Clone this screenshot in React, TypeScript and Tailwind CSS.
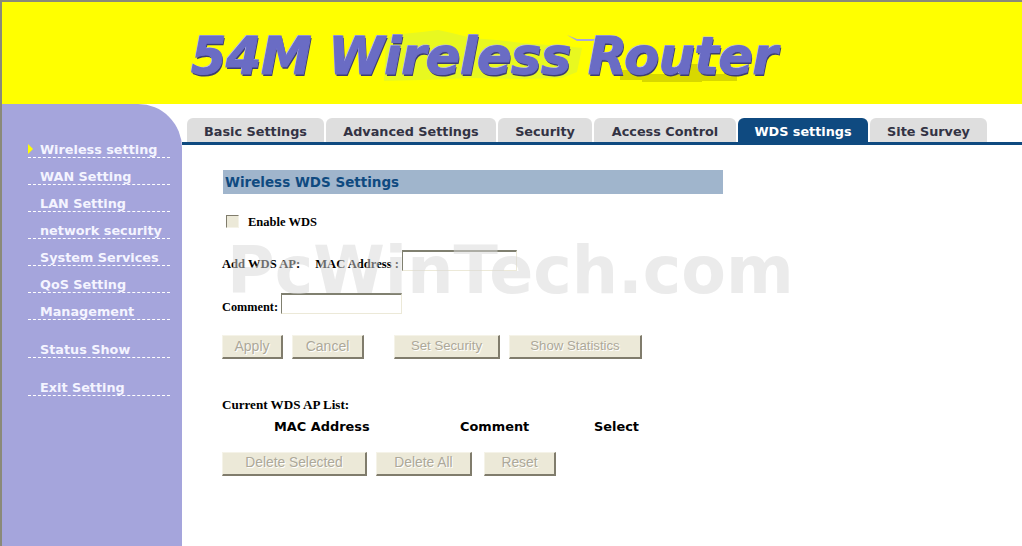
import React from "react";

const sans = "font-['DejaVu_Sans',Verdana,sans-serif]";
const serif = "font-['Liberation_Serif','Times_New_Roman',serif]";

const tabs = [
  { label: "Basic Settings", w: "w-[137px]" },
  { label: "Advanced Settings", w: "w-[170px]" },
  { label: "Security", w: "w-[94px]" },
  { label: "Access Control", w: "w-[142px]" },
  { label: "WDS settings", w: "w-[130px]", active: true },
  { label: "Site Survey", w: "w-[117px]" },
];

const nav = [
  { label: "Wireless setting", active: true },
  { label: "WAN Setting" },
  { label: "LAN Setting" },
  { label: "network security" },
  { label: "System Services" },
  { label: "QoS Setting" },
  { label: "Management" },
  { label: "Status Show", gap: true },
  { label: "Exit Setting", gap: true },
];

function Btn({ label, w, ml = "", size = "text-[13.2px]" }: { label: string; w: string; ml?: string; size?: string }) {
  return (
    <button
      disabled
      className={`${w} ${ml} ${size} h-[24px] pb-[1px] bg-[#ece9d8] border-t border-l border-t-[#f5f3e8] border-l-[#f5f3e8] border-r-2 border-b-2 border-r-[#807c6c] border-b-[#807c6c] font-['Liberation_Sans',Arial,sans-serif] leading-none text-[#aca899] [text-shadow:1px_1px_0_#fff]`}
    >
      {label}
    </button>
  );
}

function Field({ w }: { w: string }) {
  return (
    <span className={`${w} h-[21px] block border-t-2 border-l border-t-[#808070] border-l-[#808070] border-r border-b border-r-[#ece9d8] border-b-[#ece9d8]`} />
  );
}

export default function App() {
  return (
    <div className="relative w-[1022px] h-[546px] overflow-hidden bg-white flex flex-col">
      <header className="relative h-[104px] shrink-0 bg-[#ffff00] border-t-2 border-l-2 border-[#8a8a78] pl-[189px] pt-[24px]">
        <svg className="absolute left-0 top-0" width="1020" height="102" viewBox="0 0 1020 102" aria-hidden="true">
          <path d="M384 36L400 32L420 30L436 28L450 31L470 36L495 38L520 41L560 44L580 46L575 70L560 76L520 77L470 76L420 78L382 79Z" fill="#e8f820" />
          <path d="M618 68H640V72H680V62H700V72H722V66H735V79H700V80H640V78H618Z" fill="#d8d800" />
          <path d="M565 33L575 37H600L590 39H575Z" fill="#a8a8d8" />
        </svg>
        <h1 className="relative font-['DejaVu_Sans',Verdana,sans-serif] font-bold italic text-[51px] leading-[62px] tracking-[-0.5px] text-[#6a6cc4] [-webkit-text-stroke:1px_#6a6cc4] [text-shadow:-1px_-1px_0_#b9b9ea,1px_2px_0_#3e3e70]">
          54M Wireless Router
        </h1>
      </header>

      <div className="flex flex-1 min-h-0">
        <aside className="w-[182px] shrink-0 bg-[#a5a5dc] rounded-tr-[44px] border-l-2 border-[#8a8a78] pt-[27px] pl-[26px]">
          <ul className={`${sans} w-[142px] font-bold text-[12.8px] text-[#f4f4ff]`}>
            {nav.map((n) => (
              <li
                key={n.label}
                className={`relative h-[27px] pt-[10px] pl-[12px] leading-[17px] border-b border-dashed border-white ${n.gap ? "mt-[11px]" : ""}`}
              >
                {n.active && (
                  <span className="absolute left-0 top-[13px] w-0 h-0 border-y-[5px] border-y-transparent border-l-[5px] border-l-[#ffff00]" />
                )}
                {n.label}
              </li>
            ))}
          </ul>
        </aside>

        <main className="flex-1 min-w-0">
          <nav className={`${sans} h-[41px] pt-[14px] pl-[5px] flex gap-[2px] items-end border-b-[3px] border-[#0f4a80] font-bold text-[12.8px]`}>
            {tabs.map((t) => (
              <div
                key={t.label}
                className={`${t.w} h-[24px] pt-[3px] rounded-t-[6px] flex items-center justify-center ${t.active ? "bg-[#0f4a80] text-white" : "bg-[#dedede] text-[#333344]"}`}
              >
                {t.label}
              </div>
            ))}
          </nav>

          <section className="pl-[40px] pt-[25px]">
            <h2 className={`${sans} ml-px w-[500px] h-[24px] bg-[#a0b5cc] pl-[2px] font-bold text-[13.5px] leading-[24px] text-[#0f4a80]`}>
              Wireless WDS Settings
            </h2>

            <div className={`${serif} font-bold text-black`}>
              <div className="mt-[20px] ml-[4px] h-[14px] flex items-center">
                <span className="w-[13px] h-[13px] bg-[#ece9d8] border-t border-l border-[#807c6c] border-r border-b border-r-[#f5f3e8] border-b-[#f5f3e8]" />
                <span className="ml-[9px] mt-[2px] text-[12.5px]">Enable WDS</span>
              </div>

              <div className="mt-[22px] h-[21px] flex items-center text-[12.6px]">
                <span className="mt-[7px]">Add WDS AP:</span>
                <span className="ml-[15px] mt-[7px]">MAC Address :</span>
                <span className="ml-[3px]">
                  <Field w="w-[115px]" />
                </span>
              </div>

              <div className="mt-[22px] h-[21px] flex items-center text-[12.3px]">
                <span className="mt-[7px]">Comment:</span>
                <span className="ml-[3px]">
                  <Field w="w-[121px]" />
                </span>
              </div>
            </div>

            <div className="mt-[21px] flex">
              <Btn label="Apply" w="w-[61px]" size="text-[14px]" />
              <Btn label="Cancel" w="w-[72px]" ml="ml-[9px]" size="text-[14px]" />
              <Btn label="Set Security" w="w-[106px]" ml="ml-[30px]" />
              <Btn label="Show Statistics" w="w-[133px]" ml="ml-[9px]" />
            </div>

            <p className={`${serif} mt-[39px] font-bold text-[13.1px] leading-[14px] text-black`}>Current WDS AP List:</p>

            <div className={`${sans} mt-[6px] h-[18px] flex font-bold text-[12.9px] leading-[18px] text-black`}>
              <span className="ml-[52px] w-[186px]">MAC Address</span>
              <span className="w-[134px]">Comment</span>
              <span>Select</span>
            </div>

            <div className="mt-[16px] flex">
              <Btn label="Delete Selected" w="w-[145px]" size="text-[13.8px]" />
              <Btn label="Delete All" w="w-[96px]" ml="ml-[9px]" size="text-[13.8px]" />
              <Btn label="Reset" w="w-[72px]" ml="ml-[12px]" size="text-[13.8px]" />
            </div>
          </section>
        </main>
      </div>

      <div className={`${sans} absolute left-[227px] top-[231px] pointer-events-none select-none font-bold text-[65px] leading-[80px] text-[#d8d8d8]/50 whitespace-nowrap`}>
        PcWinTech.com
      </div>
    </div>
  );
}
